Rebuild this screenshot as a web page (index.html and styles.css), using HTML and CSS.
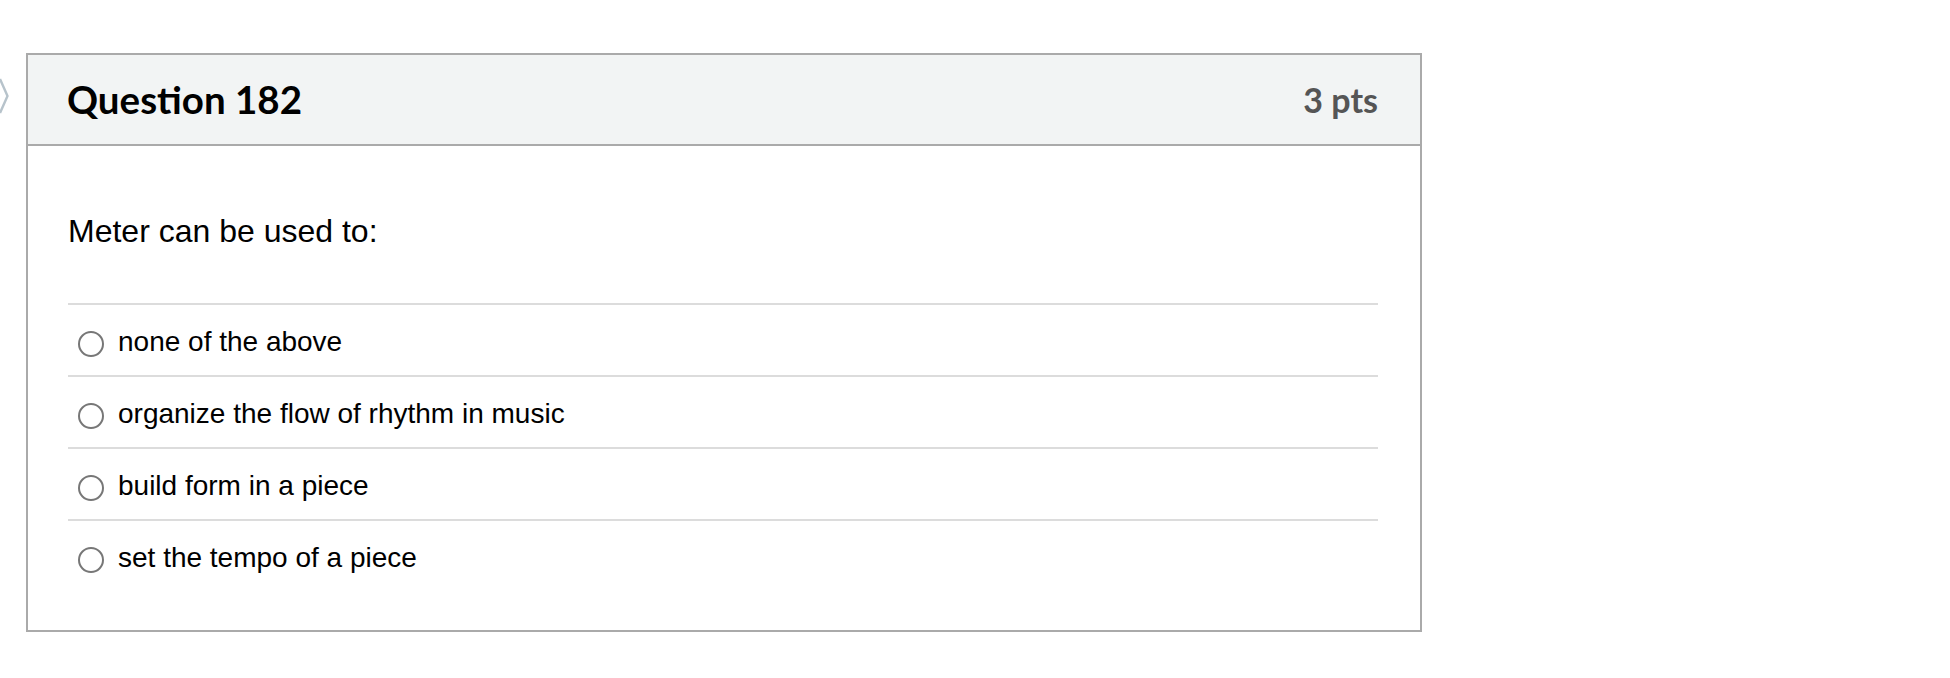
FILE: index.html
```html
<!DOCTYPE html>
<html lang="en">
<head>
<meta charset="utf-8">
<title>Question 182</title>
<link rel="stylesheet" href="styles.css">
</head>
<body>
<div class="page">
  <svg class="flag" width="12" height="40" viewBox="0 0 12 40" aria-hidden="true">
    <polyline points="0,1 7.5,18 0,35" fill="none" stroke="#b7c3cb" stroke-width="2.4" stroke-linejoin="round"/>
  </svg>
  <div class="card">
    <div class="card-header">
      <h2 class="q-title">Question 182</h2>
      <div class="q-points">3 pts</div>
    </div>
    <div class="card-body">
      <p class="q-text">Meter can be used to:</p>
      <div class="answers">
        <label class="answer"><span class="radio"></span><span class="answer-text">none of the above</span></label>
        <label class="answer"><span class="radio"></span><span class="answer-text">organize the flow of rhythm in music</span></label>
        <label class="answer"><span class="radio"></span><span class="answer-text">build form in a piece</span></label>
        <label class="answer"><span class="radio"></span><span class="answer-text">set the tempo of a piece</span></label>
      </div>
    </div>
  </div>
</div>
</body>
</html>
```
FILE: styles.css
```css
html, body {
  margin: 0;
  padding: 0;
  background: #ffffff;
}
.page {
  position: relative;
  padding: 53px 0 0 26px;
}
.flag {
  position: absolute;
  left: 0;
  top: 78px;
}
.card {
  width: 1392px;
  border: 2px solid #aaaaaa;
  background: #ffffff;
}
.card-header {
  display: flex;
  justify-content: space-between;
  align-items: center;
  height: 89px;
  padding: 0 42px 0 39px;
  background: #f2f4f4;
  border-bottom: 2px solid #aaaaaa;
  font-family: Lato, "Liberation Sans", sans-serif;
}
.q-title {
  margin: 0;
  font-size: 38.5px;
  font-weight: 700;
  color: #000000;
  line-height: 1;
}
.q-points {
  font-size: 34px;
  font-weight: 700;
  color: #555555;
  line-height: 1;
}
.card-body {
  padding: 61px 42px 39px 40px;
  font-family: "Liberation Sans", Arial, sans-serif;
}
.q-text {
  margin: 0 0 48px 0;
  font-size: 32px;
  line-height: 48px;
  color: #000000;
}
.answers {
  display: flex;
  flex-direction: column;
}
.answer {
  display: flex;
  align-items: flex-start;
  padding: 19px 0 15px 0;
  border-top: 2px solid #dcdcdc;
}
.radio {
  flex: none;
  box-sizing: border-box;
  width: 26px;
  height: 26px;
  margin: 7px 14px 0 10px;
  border: 2px solid #777777;
  border-radius: 50%;
  background: #ffffff;
}
.answer-text {
  font-size: 28px;
  line-height: 36px;
  color: #000000;
}
```
